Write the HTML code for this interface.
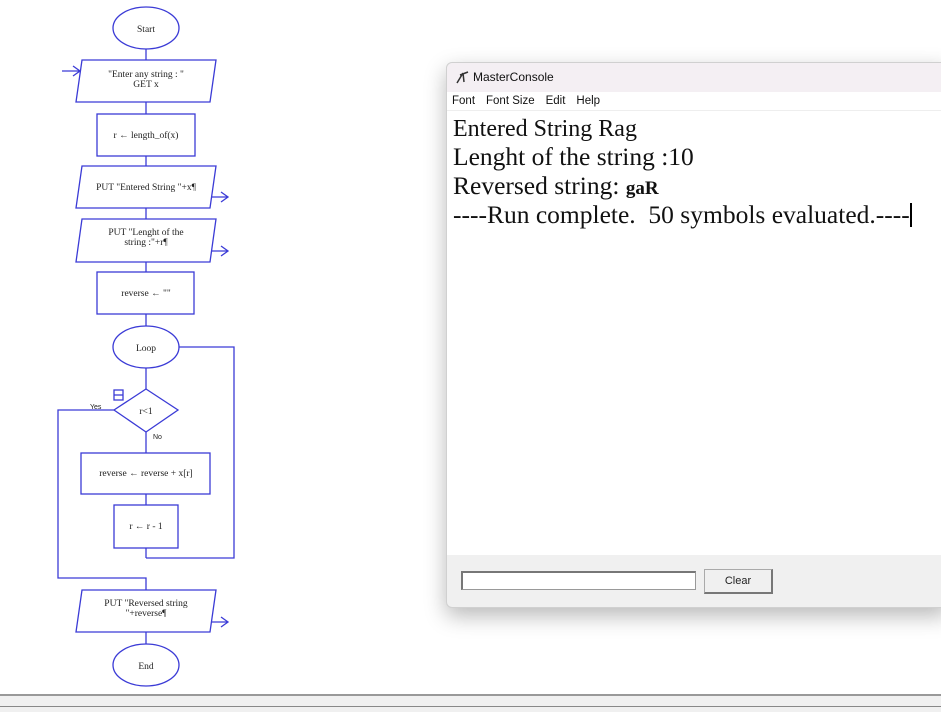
<!DOCTYPE html>
<html><head><meta charset="utf-8"><style>
body{margin:0;width:941px;height:710px;background:#fff;position:relative;overflow:hidden;font-family:"Liberation Sans",sans-serif}
svg text{font-family:"Liberation Serif",serif;font-size:9.5px;fill:#222}
.win{position:absolute;left:446px;top:62px;width:500px;height:544px;background:#f0f0f0;border:1px solid #d0d0d0;border-radius:6px 0 0 6px;box-shadow:0 8px 22px rgba(0,0,0,.28)}
.title{height:29px;background:#f4eff3;border-radius:6px 0 0 0;font-size:12px;color:#111;line-height:29px;padding-left:26px;position:relative}
.menu{height:18px;background:#fff;font-size:11.5px;color:#111;padding-left:5px;line-height:18px;border-bottom:1px solid #eee}
.menu span{margin-right:11px}
.txt{position:absolute;top:48px;left:0;right:0;height:442px;background:#fff;font-family:"Liberation Serif",serif;font-size:25.5px;color:#111;padding-left:6px;padding-top:2px}
.txt div{height:29px;line-height:29px;white-space:nowrap}
.inp{position:absolute;left:14px;top:508px;width:232px;height:16px;background:#fff;border:1px solid #999;border-top:2px solid #777;border-left:2px solid #777}
.btn{position:absolute;left:257px;top:506px;width:66px;height:22px;background:#f0f0f0;border:1px solid #aaa;border-right:2px solid #777;border-bottom:2px solid #777;font-size:11px;text-align:center;line-height:22px;color:#222}
</style></head><body>
<svg width="440" height="700" style="position:absolute;left:0;top:0" fill="none" stroke="#3b3bd6" stroke-width="1.3">
<ellipse cx="146" cy="28" rx="33" ry="21" fill="#fff"/>
<line x1="146" y1="49" x2="146" y2="60"/>
<polygon points="82,60 216,60 210,102 76,102" fill="#fff"/>
<path d="M62,71 H80 M73,66 L80,71 L73,76"/>
<line x1="146" y1="102" x2="146" y2="114"/>
<rect x="97" y="114" width="98" height="42" fill="#fff"/>
<line x1="146" y1="156" x2="146" y2="166"/>
<polygon points="82,166 216,166 210,208 76,208" fill="#fff"/>
<path d="M212,197 H228 M221,192 L228,197 L221,202"/>
<line x1="146" y1="208" x2="146" y2="219"/>
<polygon points="82,219 216,219 210,262 76,262" fill="#fff"/>
<path d="M212,251 H228 M221,246 L228,251 L221,256"/>
<line x1="146" y1="262" x2="146" y2="272"/>
<rect x="97" y="272" width="97" height="42" fill="#fff"/>
<line x1="146" y1="314" x2="146" y2="326"/>
<ellipse cx="146" cy="347" rx="33" ry="21" fill="#fff"/>
<path d="M179,347 H234 V558 H146"/>
<line x1="146" y1="368" x2="146" y2="389"/>
<polygon points="146,389 178,410 146,432 114,410" fill="#fff"/>
<rect x="114" y="390" width="9" height="10"/><line x1="114" y1="395" x2="123" y2="395"/>
<path d="M114,410 H58 V578 H146 V590"/>
<line x1="146" y1="432" x2="146" y2="453"/>
<rect x="81" y="453" width="129" height="41" fill="#fff"/>
<line x1="146" y1="494" x2="146" y2="505"/>
<rect x="114" y="505" width="64" height="43" fill="#fff"/>
<line x1="146" y1="548" x2="146" y2="558"/>
<polygon points="82,590 216,590 210,632 76,632" fill="#fff"/>
<path d="M212,622 H228 M221,617 L228,622 L221,627"/>
<line x1="146" y1="632" x2="146" y2="644"/>
<ellipse cx="146" cy="665" rx="33" ry="21" fill="#fff"/>
<g stroke="none">
<text x="146" y="32" text-anchor="middle">Start</text>
<text x="146" y="77" text-anchor="middle">"Enter any string : "</text>
<text x="146" y="87" text-anchor="middle">GET x</text>
<text x="146" y="138" text-anchor="middle">r ← length_of(x)</text>
<text x="146" y="190" text-anchor="middle">PUT "Entered String "+x¶</text>
<text x="146" y="235" text-anchor="middle">PUT "Lenght of the</text>
<text x="146" y="245" text-anchor="middle">string :"+r¶</text>
<text x="146" y="296" text-anchor="middle">reverse ← ""</text>
<text x="146" y="351" text-anchor="middle">Loop</text>
<text x="146" y="414" text-anchor="middle">r&lt;1</text>
<text x="90" y="409" style="font-family:'Liberation Sans';font-size:7px">Yes</text>
<text x="153" y="439" style="font-family:'Liberation Sans';font-size:7px">No</text>
<text x="146" y="476" text-anchor="middle">reverse ← reverse + x[r]</text>
<text x="146" y="529" text-anchor="middle">r ← r - 1</text>
<text x="146" y="606" text-anchor="middle">PUT "Reversed string</text>
<text x="146" y="616" text-anchor="middle">"+reverse¶</text>
<text x="146" y="669" text-anchor="middle">End</text>
</g>
</svg>
<div class="win">
<div class="title"><svg width="14" height="14" style="position:absolute;left:8px;top:7px" stroke="#333" stroke-width="1.5" fill="none"><path d="M2,13 L8,3 M5,5 L13,2 M8,3 L9,12"/></svg>MasterConsole</div>
<div class="menu"><span>Font</span><span>Font Size</span><span>Edit</span><span>Help</span></div>
<div class="txt">
<div><span style="font-size:24px">Entered String Rag</span></div>
<div>Lenght of the string :10</div>
<div>Reversed string: <b style="font-size:19px">gaR</b></div>
<div>----Run complete.&nbsp; 50 symbols evaluated.----<span style="display:inline-block;width:2px;height:24px;background:#000;vertical-align:-4px"></span></div>
</div>
<div class="inp"></div>
<div class="btn">Clear</div>
</div>
<div style="position:absolute;left:0;top:694px;width:941px;height:16px;background:#f0f0f0;border-top:2px solid #999"></div>
<div style="position:absolute;left:0;top:706px;width:941px;height:1px;background:#888"></div>
</body></html>
